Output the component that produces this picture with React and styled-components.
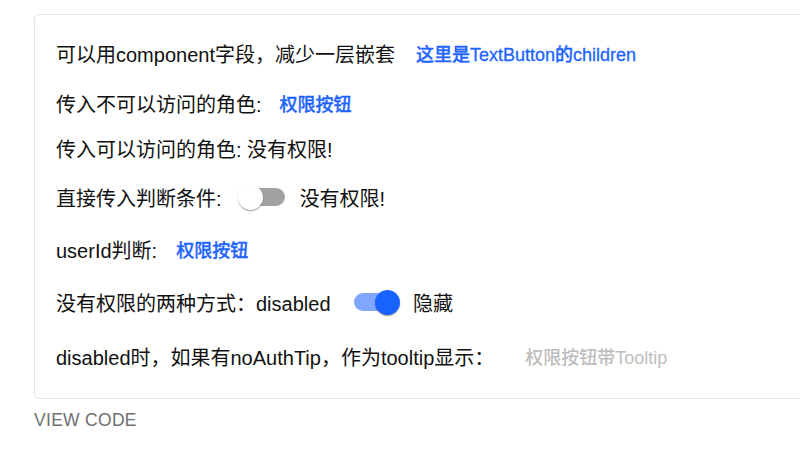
import React from 'react';
import styled, { createGlobalStyle } from 'styled-components';

const GlobalStyle = createGlobalStyle`
  html, body {
    margin: 0;
    padding: 0;
    background: #fff;
    overflow: hidden;
  }
  body {
    font-family: "Liberation Sans", "Noto Sans CJK SC", sans-serif;
    color: #111;
  }
`;

const Page = styled.div`
  width: 800px;
  padding: 14px 0 0 34px;
  box-sizing: border-box;
`;

const Card = styled.div`
  width: 800px;
  border: 1px solid #e2e2e2;
  border-radius: 5px;
  padding: 13px 0 18px 21px;
  box-sizing: border-box;
  display: flex;
  flex-direction: column;
`;

const Row = styled.div`
  height: ${p => p.$h}px;
  display: flex;
  align-items: center;
  font-size: 20px;
  white-space: nowrap;
`;

const Label = styled.span`
  white-space: pre;
`;

const TextButton = styled.button`
  border: 0;
  background: transparent;
  font-family: "Liberation Sans", "Noto Sans CJK SC", sans-serif;
  font-size: 18px;
  font-weight: 500;
  color: ${p => (p.disabled ? '#bdbdbd' : '#1e64ff')};
  padding: 7px 0;
  margin-left: ${p => p.$gap}px;
  cursor: ${p => (p.disabled ? 'default' : 'pointer')};
  -webkit-text-stroke: ${p => (p.disabled ? '0' : '0.3px')};
`;

const SwitchRoot = styled.span`
  position: relative;
  width: 72.5px;
  height: 47.5px;
  padding: 15px;
  box-sizing: border-box;
  display: inline-flex;
  flex-shrink: 0;
  margin-left: ${p => p.$gap || 0}px;
  margin-right: ${p => p.$after || 0}px;
`;

const Track = styled.span`
  width: 100%;
  height: 17.5px;
  border-radius: 9px;
  background: ${p => (p.$on ? '#7fa7ff' : '#a2a2a2')};
`;

const Thumb = styled.span`
  position: absolute;
  top: 11.25px;
  left: ${p => (p.$on ? 36.25 : 11.25)}px;
  width: 25px;
  height: 25px;
  border-radius: 50%;
  background: ${p => (p.$on ? '#1862ff' : '#fff')};
  box-shadow: 0 2px 1px -1px rgba(0, 0, 0, 0.2), 0 1px 1px 0 rgba(0, 0, 0, 0.14), 0 1px 3px 0 rgba(0, 0, 0, 0.12);
`;

const ViewCode = styled.div`
  margin-top: 9px;
  font-size: 17.5px;
  letter-spacing: 0.3px;
  text-transform: uppercase;
  color: #707070;
  line-height: 24px;
`;

const Switch = ({ on, gap, after }) => (
  <SwitchRoot $gap={gap} $after={after}>
    <Track $on={on} />
    <Thumb $on={on} />
  </SwitchRoot>
);

export default function App() {
  return (
    <Page>
      <GlobalStyle />
      <Card>
        <Row $h={50}>
          <Label>可以用component字段，减少一层嵌套</Label>
          <TextButton $gap={21}>这里是TextButton的children</TextButton>
        </Row>
        <Row $h={50}>
          <Label>传入不可以访问的角色:</Label>
          <TextButton $gap={18}>权限按钮</TextButton>
        </Row>
        <Row $h={40}>
          <Label>传入可以访问的角色: 没有权限!</Label>
        </Row>
        <Row $h={58}>
          <Label>直接传入判断条件: </Label>
          <Switch on={false} />
          <Label>没有权限!</Label>
        </Row>
        <Row $h={46}>
          <Label>userId判断:</Label>
          <TextButton $gap={19}>权限按钮</TextButton>
        </Row>
        <Row $h={60}>
          <Label>没有权限的两种方式：disabled</Label>
          <Switch on gap={8} after={2} />
          <Label>隐藏</Label>
        </Row>
        <Row $h={48}>
          <Label>disabled时，如果有noAuthTip，作为tooltip显示：</Label>
          <TextButton $gap={31} disabled>权限按钮带Tooltip</TextButton>
        </Row>
      </Card>
      <ViewCode>View code</ViewCode>
    </Page>
  );
}
